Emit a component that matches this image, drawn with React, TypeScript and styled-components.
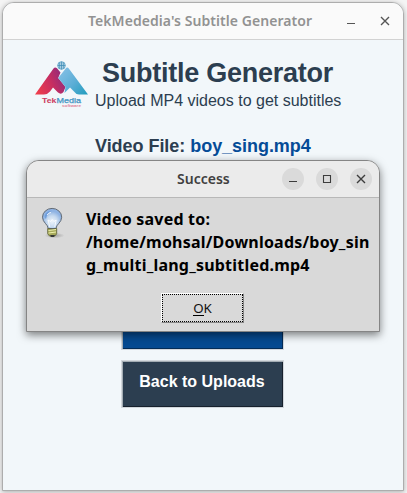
import React from "react";
import styled, { createGlobalStyle } from "styled-components";

const GlobalStyle = createGlobalStyle`
  * { box-sizing: border-box; }
  html, body { margin: 0; background: #eeeeee; overflow: hidden; }
`;

const Desktop = styled.div`
  position: relative;
  width: 407px;
  height: 493px;
  padding: 2px 0 0 2px;
  overflow: hidden;
  background: #f4f4f4;
  font-family: "Liberation Sans", Arial, sans-serif;
`;

const Window = styled.main`
  width: 402px;
  height: 489px;
  border: 1px solid #adadad;
  border-radius: 12px 12px 0 0;
  background: #f2f7fa;
  box-shadow: 0 1px 5px rgba(0, 0, 0, 0.3);
  overflow: hidden;
`;

const TitleBar = styled.header<{ $dialog?: boolean }>`
  display: grid;
  grid-template-columns: 1fr auto;
  align-items: center;
  height: 37px;
  padding-right: 7px;
  background: ${(p) => (p.$dialog ? "#ebebeb" : "#fafafa")};
  border-bottom: 1px solid ${(p) => (p.$dialog ? "#b8b8b8" : "#d2d2d2")};
`;

const Title = styled.span<{ $color: string; $indent: number; $spacing: number; $size: number }>`
  padding-left: ${(p) => p.$indent}px;
  font: 600 ${(p) => p.$size}px/20px "Noto Sans", sans-serif;
  letter-spacing: ${(p) => p.$spacing}px;
  color: ${(p) => p.$color};
  white-space: nowrap;
`;

const Controls = styled.div`
  display: flex;
  gap: 12px;
`;

const Control = styled.button<{ $filled?: boolean }>`
  display: block;
  width: 22px;
  height: 22px;
  padding: 0;
  border: 0;
  border-radius: 50%;
  background: ${(p) => (p.$filled ? "#dadada" : "transparent")};
  color: ${(p) => (p.$filled ? "#3c3c3c" : "#555")};
  svg { display: block; }
`;

const Banner = styled.section`
  display: flex;
  height: 88px;
  padding: 18px 0 0 30px;
  gap: 6px;
  > svg { margin-top: 2px; }
`;

const Heading = styled.h1`
  margin: 0;
  padding: 1px 0 0 7px;
  font-size: 27px;
  line-height: 29px;
  letter-spacing: -0.25px;
  color: #2c3e50;
  white-space: nowrap;
`;

const Tagline = styled.p`
  margin: 4px 0 0;
  font-size: 16px;
  line-height: 18px;
  color: #2c3e50;
  white-space: nowrap;
`;

const BannerText = styled.div`
  min-width: 0;
`;

const FileLine = styled.p`
  margin: 0;
  padding: 8px 0 0 92px;
  font-size: 18px;
  line-height: 21px;
  font-weight: 700;
  letter-spacing: -0.04px;
  color: #2c3e50;
  white-space: nowrap;
`;

const FileName = styled.span`
  color: #054c97;
`;

const Actions = styled.div`
  display: flex;
  flex-direction: column;
  gap: 10px;
  padding: 145px 0 0 118px;
`;

const Action = styled.button<{ $color: string; $edge: string }>`
  width: 163px;
  height: 48px;
  padding: 0 1px 5px 0;
  border: 1px solid #d2d7dc;
  box-shadow: inset 1px 1px #a3acb3, inset -1px -1px ${(p) => p.$edge};
  background: ${(p) => p.$color};
  color: #fff;
  font: 700 16px/20px "Liberation Sans", Arial, sans-serif;
`;

const Dialog = styled.section`
  position: absolute;
  left: 26px;
  top: 160px;
  width: 354px;
  height: 172px;
  border: 1px solid #858585;
  border-radius: 13px 13px 0 0;
  background: #d9d9d9;
  overflow: hidden;
  box-shadow: 0 3px 9px rgba(0, 0, 0, 0.5);
`;

const MessageRow = styled.div`
  display: flex;
  height: 95px;
  padding: 9px 0 0 14px;
`;

const Message = styled.p`
  margin: 1px 0 0;
  padding-left: 21px;
  font: 700 16px/23px "Noto Sans", sans-serif;
  letter-spacing: 0.21px;
  color: #000;
  white-space: nowrap;
`;

const OkButton = styled.button`
  display: block;
  width: 83px;
  height: 30px;
  margin: 0 0 0 134px;
  padding: 0;
  border: 1px solid;
  border-color: #fff #858585 #858585 #fff;
  background: #d9d9d9;
`;

const OkFocus = styled.span`
  display: flex;
  align-items: center;
  justify-content: center;
  height: 28px;
  border: 1px dotted #000;
  font: 13.33px/18px "Noto Sans", sans-serif;
  color: #111;
`;

const Mnemonic = styled.span`
  border-bottom: 1px solid #000;
  line-height: 14px;
`;

const Minimize = () => (
  <svg width="22" height="22" stroke="currentColor" fill="none"><path d="M7 13.5h8" strokeWidth="1.2" /></svg>
);
const Maximize = () => (
  <svg width="22" height="22" stroke="currentColor" fill="none"><path d="M7.5 7.5h7v7h-7z" strokeWidth="1.1" /></svg>
);
const Close = () => (
  <svg width="22" height="22" stroke="currentColor" fill="none"><path d="M7 7l8 8M15 7l-8 8" strokeWidth="1.35" /></svg>
);

const Logo = () => (
  <svg width="56" height="50" viewBox="0 0 56 50">
    <defs>
      <linearGradient id="warm" x1="0" y1="0.8" x2="1" y2="0.4">
        <stop stopColor="#ef3e4b" /><stop offset=".55" stopColor="#c72e61" /><stop offset="1" stopColor="#8e2b7c" />
      </linearGradient>
      <linearGradient id="cool" x1="0" y1="0.2" x2="1" y2="1">
        <stop stopColor="#83bfe5" /><stop offset=".5" stopColor="#5caed6" /><stop offset="1" stopColor="#209cbd" />
      </linearGradient>
    </defs>
    <path d="M2 34.5L20.5 8.5Q22 6.5 24 8.3L27.5 12.5L25.2 18L32.5 27L30.5 32Q28 35 25 32.5L20 27.5L17 31.5Q14.5 34.5 11 34.5Z" fill="url(#warm)" />
    <path d="M25.2 18L32.5 8.7Q34.2 6.5 36 8.7L55 34.5H46Q43 34.5 41 31.5L37 27.5L31.5 33L32.5 27Z" fill="url(#cool)" />
    <circle cx="28.5" cy="5.5" r="3.8" fill="#b8d8ea" stroke="#5aa0c5" strokeWidth=".9" />
    <path d="M24.8 5.5h7.4M28.5 1.7v7.6M26.7 2.5v6M30.3 2.5v6" fill="none" stroke="#438fb8" strokeWidth=".8" />
    <text x="9" y="42.8" textLength="14.5" lengthAdjust="spacingAndGlyphs" fontFamily="Liberation Sans" fontSize="8" fontWeight="700" fill="#cc3b60">Tek</text>
    <text x="23.5" y="42.8" textLength="24.5" lengthAdjust="spacingAndGlyphs" fontFamily="Liberation Sans" fontSize="8" fill="#3f93c2" stroke="#3f93c2" strokeWidth=".25">Media</text>
    <text x="29" y="46.6" textLength="19" lengthAdjust="spacingAndGlyphs" fontFamily="Liberation Sans" fontSize="2.6" fontWeight="700" fill="#df8298">software</text>
  </svg>
);

const Bulb = () => (
  <svg width="24" height="32" viewBox="0 0 24 32">
    <defs>
      <radialGradient id="glass" cx=".5" cy=".65"><stop stopColor="#ecf3fa" /><stop offset=".55" stopColor="#c7daef" /><stop offset="1" stopColor="#8fb3e3" /></radialGradient>
      <radialGradient id="shade"><stop stopColor="#777" stopOpacity=".6" /><stop offset="1" stopColor="#777" stopOpacity="0" /></radialGradient>
    </defs>
    <ellipse cx="13.5" cy="28.5" rx="10" ry="2.8" fill="url(#shade)" />
    <path d="M7.2 21.5C7.2 17.5 1.5 15.5 1.5 10.2A9.6 8.8 0 0 1 20.7 10.2C20.7 15.5 15 17.5 15 21.5Z" fill="url(#glass)" stroke="#626b76" strokeWidth="1" />
    <path d="M3.8 11.5Q2.8 4.8 11 3.4Q6.2 5.7 5.2 11.5Z" fill="#4e88d5" opacity=".6" />
    <path d="M8.8 20L7 13l2.6 1.5 1.6-2 1.7 2 2.3-1.5-1.5 7M6 8Q7.5 5.5 10 5.5" fill="none" stroke="#fff" strokeWidth="1" opacity=".8" />
    <path d="M6.7 21.5q4.5 1.4 9 0v5.3q-1.2 2.8-4.5 2.8t-4.5-2.8z" fill="#a8ab5c" stroke="#5b5e32" strokeWidth=".8" />
    <path d="M7.5 23.5l7.5-1M7.5 26l7.5-1" stroke="#edf0ac" strokeWidth="1" />
    <path d="M9 28h5l-1.2 2h-2.6z" fill="#373936" />
  </svg>
);

export default function App() {
  return (
    <Desktop>
      <GlobalStyle />
      <Window>
        <TitleBar>
          <Title $color="#929292" $indent={85} $spacing={0.06} $size={14}>TekMededia's Subtitle Generator</Title>
          <Controls>
            <Control aria-label="Minimize"><Minimize /></Control>
            <Control aria-label="Close"><Close /></Control>
          </Controls>
        </TitleBar>
        <Banner>
          <Logo />
          <BannerText>
            <Heading>Subtitle Generator</Heading>
            <Tagline>Upload MP4 videos to get subtitles</Tagline>
          </BannerText>
        </Banner>
        <FileLine>Video File: <FileName>boy_sing.mp4</FileName></FileLine>
        <Actions>
          <Action $color="#054a91" $edge="#032c57" aria-label="Download" />
          <Action $color="#2c3e50" $edge="#17212d">Back to Uploads</Action>
        </Actions>
      </Window>
      <Dialog role="dialog">
        <TitleBar $dialog>
          <Title $color="#3f3f3f" $indent={150} $spacing={0} $size={14}>Success</Title>
          <Controls>
            <Control $filled aria-label="Minimize"><Minimize /></Control>
            <Control $filled aria-label="Maximize"><Maximize /></Control>
            <Control $filled aria-label="Close"><Close /></Control>
          </Controls>
        </TitleBar>
        <MessageRow>
          <Bulb />
          <Message>Video saved to:<br />/home/mohsal/Downloads/boy_sin<br />g_multi_lang_subtitled.mp4</Message>
        </MessageRow>
        <OkButton><OkFocus><Mnemonic>O</Mnemonic>K</OkFocus></OkButton>
      </Dialog>
    </Desktop>
  );
}
